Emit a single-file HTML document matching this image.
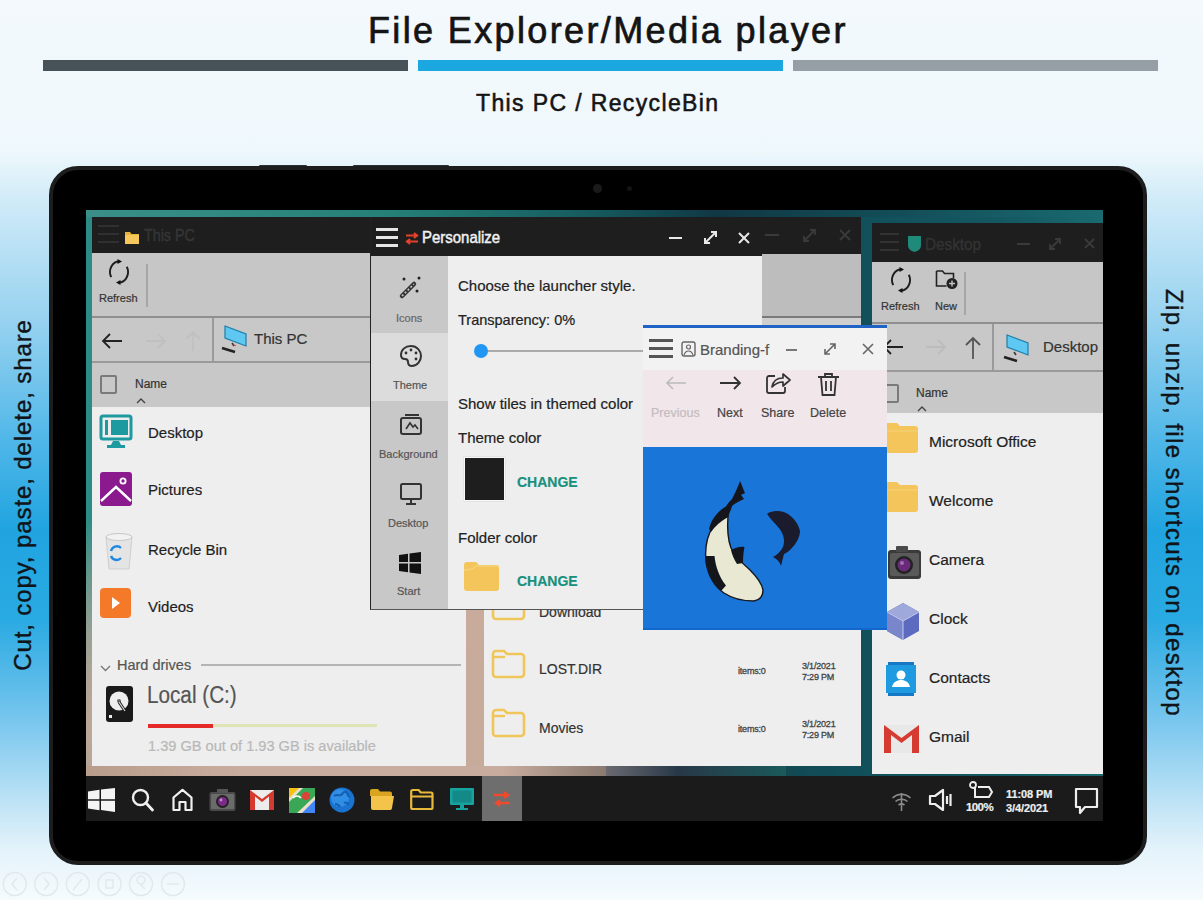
<!DOCTYPE html>
<html><head><meta charset="utf-8">
<style>
*{box-sizing:border-box;margin:0;padding:0}
html,body{width:1203px;height:900px;overflow:hidden}
body{position:relative;font-family:"Liberation Sans",sans-serif;
background:linear-gradient(180deg,#f3f9fc 0px,#eff8fc 150px,#d0ebf8 200px,#92d0ef 330px,#50b7e8 440px,#20a4e0 530px,#2aaae2 620px,#78c6ee 720px,#bce2f5 800px,#e4f3fb 850px,#f6fbfd 900px);}
.a{position:absolute}
.t{position:absolute;white-space:nowrap;line-height:1}
svg{position:absolute;overflow:visible}
#title{left:368px;top:13px;font-size:36px;color:#141414;letter-spacing:2.37px;-webkit-text-stroke:0.7px #141414}
.bar{position:absolute;top:59.5px;height:11px;width:365px}
#sub{left:476px;top:92px;font-size:23px;color:#141414;letter-spacing:1.37px;-webkit-text-stroke:0.55px #141414}
.rot{position:absolute;white-space:nowrap;font-size:24px;color:#101418;line-height:1;-webkit-text-stroke:0.4px #101418}
#tab{left:49px;top:166px;width:1098px;height:699px;border-radius:29px;background:#000;border:4px solid #1d1d1d}
#screen{left:86px;top:210px;width:1017px;height:611px;overflow:hidden;
background:linear-gradient(90deg,#2b8c86 0%,#226f6c 30%,#143e48 58%,#11505a 76%,#145862 90%,#1a6a70 100%)}
#taskbar{left:86px;top:776px;width:1017px;height:45px;background:#1b1b1b}
.win{position:absolute;overflow:hidden;background:#eeeeee}
.tb{position:absolute;left:0;top:0;right:0;background:#1e1e1e}
.g{position:absolute;left:0;right:0}
.it{position:absolute;white-space:nowrap;line-height:1;font-size:15px;color:#1e1e1e;-webkit-text-stroke:0.2px currentColor}
</style></head><body>
<div class="t" id="title">File Explorer/Media player</div>
<div class="bar" style="left:43px;background:#465258"></div>
<div class="bar" style="left:418px;background:#1ba8e1"></div>
<div class="bar" style="left:793px;background:#969ea6"></div>
<div class="t" id="sub">This PC / RecycleBin</div>
<div class="rot" id="lrot" style="left:23px;top:495px;transform:translate(-50%,-50%) rotate(-90deg);letter-spacing:0.9px">Cut, copy, paste, delete, share</div>
<div class="rot" id="rrot" style="left:1174px;top:503px;transform:translate(-50%,-50%) rotate(90deg);letter-spacing:1.4px">Zip, unzip, file shortcuts on desktop</div>

<div class="a" style="left:259px;top:164.5px;width:48px;height:4px;border-radius:1px;background:#2a3234"></div>
<div class="a" style="left:353px;top:164.5px;width:96px;height:4px;border-radius:1px;background:#2a3234"></div>
<div class="a" id="tab"></div>
<svg style="left:0;top:868px" width="200" height="32" viewBox="0 868 200 32">
  <g fill="none" stroke="#e3e8ec" stroke-width="1.5">
    <circle cx="14.8" cy="884" r="11.5"/><circle cx="46.2" cy="884" r="11.5"/><circle cx="77.8" cy="884" r="11.5"/><circle cx="109.5" cy="884" r="11.5"/><circle cx="141" cy="884" r="11.5"/><circle cx="173" cy="884" r="11.5"/>
    <path d="M17 878l-5 6 5 6M44 878l5 6-5 6M73 890l9-11M106 880h7v8h-7zM137 880a4 4 0 1 1 0 .1M140 884l5 5M167 884h12"/>
  </g>
</svg>

<div class="a" style="left:593px;top:184px;width:9px;height:9px;border-radius:50%;background:#1a1a1a"></div>
<div class="a" style="left:627px;top:186px;width:5px;height:5px;border-radius:50%;background:#141414"></div>
<div class="a" id="screen">
  <div class="a" style="left:0;top:0;width:1017px;height:611px;background:radial-gradient(ellipse 340px 260px at 200px 520px,#c6ab9b 0%,#c4a898 55%,rgba(150,120,105,0) 100%)"></div>
  <div class="a" style="left:376px;top:330px;width:26px;height:240px;background:linear-gradient(180deg,#b8a090,#c8ab9b 30%,#c6aa9a)"></div>
  <div class="a" style="left:0;top:556px;width:520px;height:10px;background:linear-gradient(90deg,#b89c8c,#c9ae9f 30%,#c8ad9e 80%,#8a7a70)"></div>
  <div class="a" style="left:520px;top:556px;width:180px;height:10px;background:linear-gradient(90deg,#6a6a70,#283848 40%,#1a5a5a)"></div>
  <div class="a" style="left:0;top:0;width:1017px;height:7px;background:linear-gradient(90deg,#3a9088,#258078 30%,#165a5e 50%,#103844 62%,#134e58 80%,#1a6a70)"></div>
</div>

<!-- ============ LEFT WINDOW: This PC ============ -->
<div class="win" id="w1" style="left:92px;top:217px;width:374px;height:549px">
  <div class="tb" style="height:36px"></div>
  <!-- hamburger faded -->
  <div class="a" style="left:6px;top:8px;width:21px;height:2px;background:#303030"></div>
  <div class="a" style="left:6px;top:16px;width:21px;height:2px;background:#303030"></div>
  <div class="a" style="left:6px;top:24px;width:21px;height:2px;background:#303030"></div>
  <svg style="left:33px;top:14px" width="14" height="13" viewBox="0 0 14 13"><path d="M0 1h5l1.5 2H14v10H0z" fill="#e8b23a"/><path d="M0 4h14v9H0z" fill="#f6c75a"/></svg>
  <div class="it" style="left:52px;top:10px;color:#363636;font-size:17px;transform:scaleX(0.84);transform-origin:0 0;-webkit-text-stroke:0.4px #363636">This PC</div>

  <div class="g" style="top:36px;height:64px;background:#c6c6c6"></div>
  <svg style="left:16px;top:42px" width="22" height="26" viewBox="0 0 22 26"><path d="M11 2.5A9 10.5 0 0 0 3.2 18.2M11 23.5A9 10.5 0 0 0 18.8 7.75" fill="none" stroke="#1e1e1e" stroke-width="1.9"/><path d="M9.5 0l4.5 2.5-4.5 2.5z" fill="#111"/><path d="M12.5 21l-4.5 2.5 4.5 2.5z" fill="#111"/></svg>
  <div class="it" style="left:7px;top:76px;font-size:11px;color:#333">Refresh</div>
  <div class="a" style="left:54px;top:47px;width:2px;height:43px;background:#a6a6a6"></div>
  <div class="g" style="top:99px;height:2px;background:#8f8f8f"></div>

  <div class="g" style="top:101px;height:43px;background:#c8c8c8"></div>
  <svg style="left:9px;top:115px" width="22" height="18" viewBox="0 0 22 18"><path d="M21 9H2M9 2L2 9l7 7" fill="none" stroke="#222" stroke-width="1.8"/></svg>
  <svg style="left:53px;top:115px" width="22" height="18" viewBox="0 0 22 18"><path d="M1 9h19M13 2l7 7-7 7" fill="none" stroke="#c0c0c0" stroke-width="1.8"/></svg>
  <svg style="left:92px;top:113px" width="18" height="22" viewBox="0 0 18 22"><path d="M9 21V2M2 9l7-7 7 7" fill="none" stroke="#c1c1c1" stroke-width="1.8"/></svg>
  <div class="a" style="left:120px;top:101px;width:2px;height:43px;background:#9a9a9a"></div>
  <svg style="left:129px;top:107px" width="27" height="30" viewBox="0 0 27 30"><path d="M4 2l21 8v12L4 14z" fill="#5ec8f2" stroke="#1d7ea8" stroke-width="1.2"/><path d="M11 19l2 3" stroke="#333" stroke-width="1.5"/><path d="M1 24l13 4" stroke="#222" stroke-width="2.5"/><path d="M12 20l3 2" stroke="#e04040" stroke-width="1"/></svg>
  <div class="it" style="left:162px;top:114px;font-size:15px;color:#333">This PC</div>
  <div class="g" style="top:144px;height:2px;background:#9a9a9a"></div>

  <div class="g" style="top:146px;height:44px;background:#c8c8c8"></div>
  <div class="a" style="left:8px;top:158px;width:17px;height:19px;border:2px solid #7a7a7a;border-radius:2px"></div>
  <div class="it" style="left:43px;top:161px;font-size:12px;color:#333">Name</div>
  <svg style="left:44px;top:181px" width="10" height="6" viewBox="0 0 10 6"><path d="M1 5l4-4 4 4" fill="none" stroke="#444" stroke-width="1.4"/></svg>

  <!-- items -->
  <svg style="left:7px;top:197px" width="34" height="36" viewBox="0 0 34 36"><rect x="2" y="2" width="30" height="23" rx="2" fill="none" stroke="#1c9aa0" stroke-width="3"/><rect x="12" y="6" width="17" height="15" fill="#1c9aa0"/><rect x="6" y="6" width="3" height="15" fill="#1c9aa0"/><path d="M14 27h6l2 4h4v3H8v-3h4z" fill="#1c9aa0"/></svg>
  <div class="it" style="left:56px;top:208px">Desktop</div>
  <svg style="left:7px;top:254px" width="34" height="36" viewBox="0 0 34 36"><rect x="1" y="1" width="32" height="34" rx="3" fill="#8a1a8e"/><path d="M2 30L17 16l15 14" fill="none" stroke="#fff" stroke-width="2.4"/><circle cx="24" cy="10" r="2.6" fill="none" stroke="#fff" stroke-width="1.8"/></svg>
  <div class="it" style="left:56px;top:265px">Pictures</div>
  <svg style="left:11px;top:314px" width="32" height="40" viewBox="0 0 32 40"><path d="M3 6h26l-3 32H6z" fill="#e4e4e4" stroke="#cfcfcf" stroke-width="1"/><ellipse cx="16" cy="6" rx="13" ry="3.5" fill="#f2f2f2" stroke="#c8c8c8"/><path d="M8 20a6 6 0 0 1 10-3M18 27a6 6 0 0 1-10-2" fill="none" stroke="#1e88e5" stroke-width="2.4"/></svg>
  <div class="it" style="left:56px;top:325px">Recycle Bin</div>
  <svg style="left:8px;top:371px" width="31" height="30" viewBox="0 0 31 30"><rect x="0" y="0" width="31" height="30" rx="4" fill="#f47a2a"/><path d="M12 9l8 6-8 6z" fill="#fff"/></svg>
  <div class="it" style="left:56px;top:382px">Videos</div>

  <svg style="left:8px;top:448px" width="11" height="7" viewBox="0 0 11 7"><path d="M1 1l4.5 4.5L10 1" fill="none" stroke="#777" stroke-width="1.4"/></svg>
  <div class="it" style="left:25px;top:441px;font-size:14.5px;color:#555">Hard drives</div>
  <div class="a" style="left:109px;top:447px;width:260px;height:2px;background:#b4b4b4"></div>
  <svg style="left:14px;top:469px" width="27" height="36" viewBox="0 0 27 36"><rect x="0" y="0" width="27" height="36" rx="3" fill="#1a1a1a"/><circle cx="13" cy="15" r="9.5" fill="#eee"/><circle cx="13" cy="15" r="2" fill="#666"/><path d="M13 16l6 9" stroke="#1a1a1a" stroke-width="3"/><path d="M13 16l6 9" stroke="#ddd" stroke-width="1.2"/><rect x="3" y="29" width="3" height="3" fill="#eee"/></svg>
  <div class="it" style="left:55px;top:467px;font-size:23px;color:#555;transform:scaleX(0.9);transform-origin:0 0">Local (C:)</div>
  <div class="a" style="left:56px;top:507px;width:229px;height:3px;background:#dfe4b4"></div>
  <div class="a" style="left:56px;top:507px;width:65px;height:4px;background:#e52a2a"></div>
  <div class="it" style="left:56px;top:522px;font-size:14.6px;color:#b8b8b8">1.39 GB out of 1.93 GB is available</div>
</div>


<!-- ============ MIDDLE WINDOW ============ -->
<div class="win" id="w2" style="left:484px;top:217px;width:377px;height:549px">
  <div class="tb" style="height:37px"></div>
  <div class="a" style="left:281px;top:17px;width:14px;height:2px;background:#3a3a3a"></div>
  <svg style="left:318px;top:11px" width="15" height="15" viewBox="0 0 15 15"><path d="M2 13L13 2M8 2h5v5M2 8v5h5" fill="none" stroke="#3a3a3a" stroke-width="1.8"/></svg>
  <svg style="left:355px;top:12px" width="12" height="12" viewBox="0 0 12 12"><path d="M1 1l10 10M11 1L1 11" fill="none" stroke="#3a3a3a" stroke-width="1.8"/></svg>
  <div class="g" style="top:37px;height:62px;background:#bdbdbd"></div>
  <div class="g" style="top:99px;height:2px;background:#7a7a7a"></div>
  <div class="g" style="top:101px;height:44px;background:#cfcfcf"></div>
  <!-- items -->
  <svg style="left:7px;top:374px" width="35" height="30" viewBox="0 0 35 30"><path d="M2 5a3 3 0 0 1 3-3h8l3 3h14a3 3 0 0 1 3 3v17a3 3 0 0 1-3 3H5a3 3 0 0 1-3-3z" fill="none" stroke="#f0c65a" stroke-width="2.6"/><path d="M3 8h11" stroke="#f0c65a" stroke-width="2.4"/></svg>
  <div class="it" style="left:55px;top:388px;font-size:14px;color:#333">Download</div>
  <svg style="left:7px;top:432px" width="35" height="30" viewBox="0 0 35 30"><path d="M2 5a3 3 0 0 1 3-3h8l3 3h14a3 3 0 0 1 3 3v17a3 3 0 0 1-3 3H5a3 3 0 0 1-3-3z" fill="none" stroke="#f0c65a" stroke-width="2.6"/><path d="M3 8h11" stroke="#f0c65a" stroke-width="2.4"/></svg>
  <div class="it" style="left:55px;top:445px;font-size:14px;color:#333">LOST.DIR</div>
  <svg style="left:7px;top:491px" width="35" height="30" viewBox="0 0 35 30"><path d="M2 5a3 3 0 0 1 3-3h8l3 3h14a3 3 0 0 1 3 3v17a3 3 0 0 1-3 3H5a3 3 0 0 1-3-3z" fill="none" stroke="#f0c65a" stroke-width="2.6"/><path d="M3 8h11" stroke="#f0c65a" stroke-width="2.4"/></svg>
  <div class="it" style="left:55px;top:504px;font-size:14px;color:#333">Movies</div>
  <div class="it" style="left:254px;top:450px;font-size:9px;color:#444;-webkit-text-stroke:0.3px #444;letter-spacing:-0.2px">items:0</div>
  <div class="it" style="left:318px;top:444px;font-size:9px;color:#444;-webkit-text-stroke:0.3px #444;letter-spacing:-0.2px;line-height:10.5px">3/1/2021<br>7:29 PM</div>
  <div class="it" style="left:254px;top:508px;font-size:9px;color:#444;-webkit-text-stroke:0.3px #444;letter-spacing:-0.2px">items:0</div>
  <div class="it" style="left:318px;top:502px;font-size:9px;color:#444;-webkit-text-stroke:0.3px #444;letter-spacing:-0.2px;line-height:10.5px">3/1/2021<br>7:29 PM</div>
</div>

<!-- ============ RIGHT WINDOW: Desktop ============ -->
<div class="win" id="w3" style="left:872px;top:223px;width:231px;height:551px">
  <div class="tb" style="height:39px"></div>
  <div class="a" style="left:8px;top:10px;width:19px;height:2px;background:#333"></div>
  <div class="a" style="left:8px;top:18px;width:19px;height:2px;background:#333"></div>
  <div class="a" style="left:8px;top:26px;width:19px;height:2px;background:#333"></div>
  <svg style="left:36px;top:13px" width="13" height="16" viewBox="0 0 13 16"><path d="M0 0h13v9c0 4-3 6-6.5 7C3 15 0 13 0 9z" fill="#1f8a7a"/></svg>
  <div class="it" style="left:53px;top:13px;color:#333;font-size:17px;transform:scaleX(0.9);transform-origin:0 0;-webkit-text-stroke:0.4px #333">Desktop</div>
  <div class="a" style="left:145px;top:20px;width:13px;height:2px;background:#3a3a3a"></div>
  <svg style="left:176px;top:14px" width="14" height="14" viewBox="0 0 14 14"><path d="M2 12L12 2M7 2h5v5M2 7v5h5" fill="none" stroke="#3a3a3a" stroke-width="1.8"/></svg>
  <svg style="left:212px;top:15px" width="11" height="11" viewBox="0 0 11 11"><path d="M1 1l9 9M10 1L1 10" fill="none" stroke="#3a3a3a" stroke-width="1.8"/></svg>
  <div class="g" style="top:39px;height:60px;background:#c6c6c6"></div>
  <svg style="left:18px;top:44px" width="22" height="26" viewBox="0 0 22 26"><path d="M11 2.5A9 10.5 0 0 0 3.2 18.2M11 23.5A9 10.5 0 0 0 18.8 7.75" fill="none" stroke="#1e1e1e" stroke-width="1.9"/><path d="M9.5 0l4.5 2.5-4.5 2.5z" fill="#111"/><path d="M12.5 21l-4.5 2.5 4.5 2.5z" fill="#111"/></svg>
  <div class="it" style="left:9px;top:78px;font-size:11px;color:#333">Refresh</div>
  <svg style="left:63px;top:45px" width="24" height="22" viewBox="0 0 24 22"><path d="M1.5 3h6l2 2.5h9v5M1.5 3v15h10" fill="none" stroke="#222" stroke-width="1.6"/><circle cx="17" cy="15.5" r="5.5" fill="#222"/><path d="M17 12.5v6M14 15.5h6" stroke="#c6c6c6" stroke-width="1.4"/></svg>
  <div class="it" style="left:63px;top:78px;font-size:11px;color:#333">New</div>
  <div class="a" style="left:92px;top:49px;width:2px;height:43px;background:#a6a6a6"></div>
  <div class="g" style="top:99px;height:2px;background:#8f8f8f"></div>
  <div class="g" style="top:101px;height:46px;background:#c8c8c8"></div>
  <svg style="left:10px;top:115px" width="22" height="18" viewBox="0 0 22 18"><path d="M21 9H2M9 2L2 9l7 7" fill="none" stroke="#222" stroke-width="1.8"/></svg>
  <svg style="left:53px;top:115px" width="22" height="18" viewBox="0 0 22 18"><path d="M1 9h19M13 2l7 7-7 7" fill="none" stroke="#bcbcbc" stroke-width="1.8"/></svg>
  <svg style="left:92px;top:113px" width="18" height="24" viewBox="0 0 18 24"><path d="M9 23V2M2 9l7-7 7 7" fill="none" stroke="#555" stroke-width="1.8"/></svg>
  <div class="a" style="left:120px;top:101px;width:2px;height:46px;background:#9a9a9a"></div>
  <svg style="left:131px;top:110px" width="27" height="30" viewBox="0 0 27 30"><path d="M4 2l21 8v12L4 14z" fill="#5ec8f2" stroke="#1d7ea8" stroke-width="1.2"/><path d="M11 19l2 3" stroke="#333" stroke-width="1.5"/><path d="M1 24l13 4" stroke="#222" stroke-width="2.5"/></svg>
  <div class="it" style="left:171px;top:116px;font-size:15px;color:#333">Desktop</div>
  <div class="g" style="top:147px;height:2px;background:#9a9a9a"></div>
  <div class="g" style="top:149px;height:41px;background:#c8c8c8"></div>
  <div class="a" style="left:10px;top:161px;width:17px;height:19px;border:2px solid #7a7a7a;border-radius:2px"></div>
  <div class="it" style="left:44px;top:164px;font-size:12px;color:#333">Name</div>
  <svg style="left:45px;top:183px" width="10" height="6" viewBox="0 0 10 6"><path d="M1 5l4-4 4 4" fill="none" stroke="#444" stroke-width="1.4"/></svg>
  <!-- items -->
  <svg style="left:13px;top:200px" width="33" height="30" viewBox="0 0 33 30"><path d="M0 3a3 3 0 0 1 3-3h9l3 3h15a3 3 0 0 1 3 3v21a3 3 0 0 1-3 3H3a3 3 0 0 1-3-3z" fill="#f4c55a"/><path d="M0 8h33" stroke="#f8d27a" stroke-width="1"/></svg>
  <div class="it" style="left:57px;top:211px;font-size:15.5px;color:#222">Microsoft Office</div>
  <svg style="left:13px;top:259px" width="33" height="30" viewBox="0 0 33 30"><path d="M0 3a3 3 0 0 1 3-3h9l3 3h15a3 3 0 0 1 3 3v21a3 3 0 0 1-3 3H3a3 3 0 0 1-3-3z" fill="#f4c55a"/><path d="M0 8h33" stroke="#f8d27a" stroke-width="1"/></svg>
  <div class="it" style="left:57px;top:270px;font-size:15.5px;color:#222">Welcome</div>
  <svg style="left:16px;top:322px" width="33" height="35" viewBox="0 0 33 35"><rect x="0" y="5" width="33" height="29" rx="3" fill="#3a3a3a"/><rect x="2" y="8" width="29" height="23" rx="2" fill="#5a5a5a"/><rect x="8" y="1" width="12" height="6" rx="1" fill="#4a4a4a"/><circle cx="16" cy="20" r="9" fill="#222"/><circle cx="16" cy="20" r="6.5" fill="#6a2a7a"/><circle cx="14" cy="18" r="2" fill="#a070b0"/></svg>
  <div class="it" style="left:57px;top:329px;font-size:15.5px;color:#222">Camera</div>
  <svg style="left:14px;top:379px" width="34" height="39" viewBox="0 0 34 39"><path d="M17 1L33 10v19L17 38 1 29V10z" fill="#5c6bc0"/><path d="M17 1L33 10 17 19 1 10z" fill="#9fa8da"/><path d="M17 19v19L1 29V10z" fill="#7986cb"/><path d="M17 19L33 10M17 19L1 10M17 19v19" stroke="#c5cae9" stroke-width="1"/></svg>
  <div class="it" style="left:57px;top:388px;font-size:15.5px;color:#222">Clock</div>
  <svg style="left:12px;top:439px" width="34" height="34" viewBox="0 0 34 34"><path d="M2 3h30v28H2z" fill="#1e9ae0"/><path d="M4 0h26v3H4zM4 31h26v3H4z" fill="#1677c4"/><circle cx="17" cy="13" r="4.5" fill="#fff"/><path d="M8 25c1-5 5-7 9-7s8 2 9 7z" fill="#fff"/></svg>
  <div class="it" style="left:57px;top:447px;font-size:15.5px;color:#222">Contacts</div>
  <svg style="left:10px;top:500px" width="39" height="31" viewBox="0 0 39 31"><path d="M2 2h35v28H2z" fill="#e8e8e8"/><path d="M2 2v28h7V12l10.5 8L30 12v18h7V2l-17.5 13z" fill="#d53b30"/></svg>
  <div class="it" style="left:57px;top:506px;font-size:15.5px;color:#222">Gmail</div>
</div>

<!-- ============ PERSONALIZE ============ -->
<div class="win" id="w4" style="left:370px;top:217px;width:392px;height:393px;background:#eeeeee;border-left:1.5px solid #222;border-bottom:1.5px solid #555">
  <div class="tb" style="height:39px"></div>
  <div class="a" style="left:5px;top:11px;width:22px;height:3px;background:#e6e6e6"></div>
  <div class="a" style="left:5px;top:19px;width:22px;height:3px;background:#e6e6e6"></div>
  <div class="a" style="left:5px;top:27px;width:22px;height:3px;background:#e6e6e6"></div>
  <svg style="left:34px;top:15px" width="14" height="13" viewBox="0 0 14 13"><path d="M1 3.5h11M9 1l3 2.5-3 2.5M13 9.5H2M5 7l-3 2.5 3 2.5" fill="none" stroke="#e5412a" stroke-width="2.2"/></svg>
  <div class="it" style="left:51px;top:12px;font-size:17px;color:#f0f0f0;transform:scaleX(0.88);transform-origin:0 0;-webkit-text-stroke:0.5px #f0f0f0">Personalize</div>
  <div class="a" style="left:298px;top:20px;width:13px;height:2px;background:#e8e8e8"></div>
  <svg style="left:332px;top:13px" width="15" height="15" viewBox="0 0 15 15"><path d="M2 13L13 2M8 2h5v5M2 8v5h5" fill="none" stroke="#e8e8e8" stroke-width="2"/></svg>
  <svg style="left:367px;top:15px" width="12" height="12" viewBox="0 0 12 12"><path d="M1 1l10 10M11 1L1 11" fill="none" stroke="#e8e8e8" stroke-width="2"/></svg>
  <div class="a" style="left:0;top:39px;width:77px;height:354px;background:#c8c8c8"></div>
  <div class="a" style="left:0;top:116px;width:77px;height:68px;background:#dcdcdc"></div>
  <!-- side icons -->
  <svg style="left:28px;top:59px" width="23" height="23" viewBox="0 0 23 23"><path d="M3 20L15 8" stroke="#333" stroke-width="4.5" stroke-linecap="round"/><path d="M3 20L15 8" stroke="#c8c8c8" stroke-width="1.6" stroke-dasharray="2 2"/><circle cx="5" cy="3" r="1.5" fill="#222"/><circle cx="20" cy="2" r="1.5" fill="#222"/><circle cx="18" cy="15" r="1.5" fill="#222"/></svg>
  <div class="it" style="left:25px;top:96px;font-size:11px;color:#666">Icons</div>
  <svg style="left:28px;top:127px" width="24" height="24" viewBox="0 0 24 24"><path d="M12 2C6 2 2 6 2 11c0 3 2 4 4 4 2 0 3 1 3 3 0 2 1 4 4 4 5 0 9-5 9-10S18 2 12 2z" fill="none" stroke="#333" stroke-width="2"/><circle cx="7" cy="9" r="1.4" fill="#333"/><circle cx="12" cy="6" r="1.4" fill="#333"/><circle cx="17" cy="9" r="1.4" fill="#333"/><circle cx="17" cy="15" r="1.4" fill="#333"/></svg>
  <div class="it" style="left:22px;top:163px;font-size:11px;color:#555">Theme</div>
  <svg style="left:28px;top:196px" width="24" height="22" viewBox="0 0 24 22"><rect x="2" y="5" width="20" height="16" rx="2" fill="none" stroke="#333" stroke-width="2"/><path d="M6 2h14" stroke="#333" stroke-width="2"/><path d="M7 16l4-6 3 4 2-2 3 4" fill="none" stroke="#333" stroke-width="1.6"/></svg>
  <div class="it" style="left:8px;top:232px;font-size:11px;color:#555">Background</div>
  <svg style="left:28px;top:265px" width="24" height="24" viewBox="0 0 24 24"><rect x="2" y="2" width="20" height="15" rx="1.5" fill="none" stroke="#333" stroke-width="2"/><path d="M12 17v4M7 22h10" stroke="#333" stroke-width="2"/></svg>
  <div class="it" style="left:17px;top:301px;font-size:11px;color:#555">Desktop</div>
  <svg style="left:27px;top:334px" width="24" height="24" viewBox="0 0 24 24"><path d="M1 4l9-1.3V11H1zM11.5 2.5L23 1v10H11.5zM1 12.5h9v8.8L1 20zM11.5 12.5H23V23l-11.5-1.5z" fill="#111"/></svg>
  <div class="it" style="left:26px;top:369px;font-size:11px;color:#555">Start</div>
  <!-- content -->
  <div class="it" style="left:87px;top:61px;font-size:15px;color:#222">Choose the launcher style.</div>
  <div class="it" style="left:87px;top:96px;font-size:14.5px;color:#222">Transparency: 0%</div>
  <div class="a" style="left:110px;top:133px;width:280px;height:2px;background:#aaa"></div>
  <div class="a" style="left:103px;top:127px;width:14px;height:14px;border-radius:50%;background:#2196f3"></div>
  <div class="it" style="left:87px;top:179px;font-size:15px;color:#222">Show tiles in themed color</div>
  <div class="it" style="left:87px;top:213px;font-size:15px;color:#222">Theme color</div>
  <div class="a" style="left:93px;top:240px;width:41px;height:44px;background:#1e1e1e;border:1.5px solid #f8f8f8;box-shadow:0 0 1px #aaa"></div>
  <div class="it" style="left:146px;top:258px;font-size:14px;color:#17917f;font-weight:bold">CHANGE</div>
  <div class="it" style="left:87px;top:313px;font-size:15px;color:#222">Folder color</div>
  <svg style="left:93px;top:345px" width="35" height="29" viewBox="0 0 35 29"><path d="M0 3a3 3 0 0 1 3-3h9l3 3h17a3 3 0 0 1 3 3v20a3 3 0 0 1-3 3H3a3 3 0 0 1-3-3z" fill="#f4c55a"/><path d="M0 8c5 0 9-1 12-4h23" fill="none" stroke="#f8d98a" stroke-width="1"/></svg>
  <div class="it" style="left:146px;top:357px;font-size:14px;color:#17917f;font-weight:bold">CHANGE</div>
</div>

<!-- ============ BRANDING IMAGE VIEWER ============ -->
<div class="win" id="w5" style="left:643px;top:325px;width:244px;height:305px;background:#f2f2f2">
  <div class="g" style="top:0;height:2.5px;background:#1f63c4"></div>
  <div class="a" style="left:6px;top:14px;width:24px;height:2.5px;background:#555"></div>
  <div class="a" style="left:6px;top:22px;width:24px;height:2.5px;background:#555"></div>
  <div class="a" style="left:6px;top:30px;width:24px;height:2.5px;background:#555"></div>
  <svg style="left:38px;top:16px" width="15" height="16" viewBox="0 0 15 16"><rect x="1" y="1" width="13" height="14" rx="2" fill="none" stroke="#666" stroke-width="1.4"/><circle cx="7.5" cy="6" r="2" fill="none" stroke="#666" stroke-width="1.2"/><path d="M3 14c1-3 3-4 4.5-4s3.5 1 4.5 4" fill="none" stroke="#666" stroke-width="1.2"/></svg>
  <div class="it" style="left:57px;top:17px;font-size:15px;color:#555">Branding-f</div>
  <div class="a" style="left:143px;top:24px;width:11px;height:2px;background:#777"></div>
  <svg style="left:180px;top:17px" width="14" height="14" viewBox="0 0 14 14"><path d="M2 12L12 2M7 2h5v5M2 7v5h5" fill="none" stroke="#666" stroke-width="1.6"/></svg>
  <svg style="left:219px;top:18px" width="12" height="12" viewBox="0 0 12 12"><path d="M1 1l10 10M11 1L1 11" fill="none" stroke="#666" stroke-width="1.6"/></svg>
  <div class="g" style="top:45px;height:77px;background:#f1e6ea"></div>
  <svg style="left:22px;top:51px" width="22" height="14" viewBox="0 0 22 14"><path d="M21 7H2M8 1L2 7l6 6" fill="none" stroke="#bbb" stroke-width="1.6"/></svg>
  <div class="it" style="left:8px;top:82px;font-size:12.5px;color:#c4bcbe">Previous</div>
  <svg style="left:76px;top:51px" width="23" height="14" viewBox="0 0 23 14"><path d="M1 7h20M15 1l6 6-6 6" fill="none" stroke="#333" stroke-width="1.8"/></svg>
  <div class="it" style="left:74px;top:82px;font-size:12.5px;color:#444">Next</div>
  <svg style="left:123px;top:47px" width="25" height="22" viewBox="0 0 25 22"><path d="M9 4H3a2 2 0 0 0-2 2v13a2 2 0 0 0 2 2h14a2 2 0 0 0 2-2v-4" fill="none" stroke="#333" stroke-width="1.8"/><path d="M6 15c1-6 5-9 11-9V2l7 6-7 6V10c-5 0-8 2-11 5z" fill="none" stroke="#333" stroke-width="1.7" stroke-linejoin="round"/></svg>
  <div class="it" style="left:118px;top:82px;font-size:12.5px;color:#444">Share</div>
  <svg style="left:174px;top:47px" width="23" height="25" viewBox="0 0 23 25"><path d="M1 5h21M8 5V2h7v3M4 5l1.5 18h12L19 5M9 9v10M14 9v10" fill="none" stroke="#333" stroke-width="1.8"/></svg>
  <div class="it" style="left:167px;top:82px;font-size:12.5px;color:#444">Delete</div>
  <div class="g" style="top:122px;height:183px;background:#1976d8;border-bottom:2px solid #1266cc"></div>
  <svg style="left:0;top:0" width="245" height="305" viewBox="643 325 245 305">
    <path d="M728 516 C720 519 713 524 710 532 C706 541 705 552 706 562 C708 575 714 586 724 593 C733 599 745 601 754 601 C760 600 763 596 763 590 C762 584 757 577 750 570 C742 563 735 556 731 548 C728 540 727 530 728 516 Z" fill="#e9e8d2" stroke="#15151c" stroke-width="1.4"/>
    <path d="M725 507 L732 506 C731 510 729 514 728 517 C721 521 715 526 711 532 L709 529 C711 520 717 512 725 507 Z" fill="#15151c"/>
    <path d="M705.5 556 C705.5 558 705.7 560 706 562 C708 575 714 586 721 591 L726 585.5 C719 577 715.5 566 714.5 556 Z" fill="#15151c"/>
    <path d="M731 550 C735 548 740 546 744.5 547 C743.5 552 743 557 743 563 L737 564 C734 559 732 555 731 550 Z" fill="#15151c"/>
    <path d="M740 481 C742 485 743 489 745 493 L741 495 L744 499 C740 501 735 503 731 507 L725 508 C727 504 730 501 732 499 C735 493 738 487 740 481 Z" fill="#15151c"/>
    <path d="M767 514 C770 511 781 509 788 514 C794 518 799 525 800 531 C800 537 796 544 791 549 C788 552 786 553 784 554 L781 566 C780 562 777 559 773 557 C777 555 781 551 783 547 C785 542 784 536 781 531 C778 526 772 521 767 514 Z" fill="#1b1b2e"/>
  </svg>
</div>

<div class="a" id="taskbar">
  <!-- coordinates relative to taskbar: page x-86, y-776 -->
  <svg style="left:2px;top:12px" width="27" height="24" viewBox="0 0 27 24"><path d="M0 3.5L11.5 1.8V11.3H0zM13 1.5L27 0V11.3H13zM0 12.7h11.5v9.6L0 20.6zM13 12.7h14V24l-14-1.9z" fill="#f4f4f4"/></svg>
  <svg style="left:45px;top:12px" width="23" height="24" viewBox="0 0 23 24"><circle cx="9.5" cy="9.5" r="7.5" fill="none" stroke="#f0f0f0" stroke-width="2.4"/><path d="M15 15l6.5 7" stroke="#f0f0f0" stroke-width="2.8" stroke-linecap="round"/></svg>
  <svg style="left:85px;top:12px" width="23" height="23" viewBox="0 0 23 23"><path d="M2.5 22V9.5L11.5 1.8l9 7.7V22h-6v-8h-6v8z" fill="none" stroke="#f0f0f0" stroke-width="2.2" stroke-linejoin="round"/></svg>
  <svg style="left:123px;top:12px" width="27" height="24" viewBox="0 0 27 24"><rect x="0.5" y="4" width="26" height="19" rx="2" fill="#4a4a4a"/><rect x="2" y="6" width="23" height="15" rx="1" fill="#6b6b6b"/><rect x="8" y="1" width="11" height="4" fill="#555"/><circle cx="13.5" cy="13.5" r="6.5" fill="#222"/><circle cx="13.5" cy="13.5" r="4.6" fill="#7a2a88"/><circle cx="12" cy="12" r="1.4" fill="#c090d0"/></svg>
  <svg style="left:163px;top:13px" width="26" height="22" viewBox="0 0 26 22"><path d="M1 1h24v20H1z" fill="#ececec"/><path d="M1 1v20h5V7.5l7 5.5 7-5.5V21h5V1l-12 9z" fill="#d63a2e"/></svg>
  <svg style="left:203px;top:12px" width="26" height="25" viewBox="0 0 26 25"><path d="M0 0h26v25H0z" fill="#e8e0c8"/><path d="M0 14L14 0h12v8L8 25H0z" fill="#3aa757"/><path d="M13 25L26 12v13z" fill="#4285f4"/><path d="M0 0h10L0 10z" fill="#f4c20d"/><circle cx="17" cy="8" r="4" fill="#db4437"/><path d="M4 10a5 5 0 0 1 8 0" fill="none" stroke="#fff" stroke-width="1.6"/></svg>
  <svg style="left:243px;top:11px" width="26" height="26" viewBox="0 0 26 26"><circle cx="13" cy="13" r="12.5" fill="#1a73d1"/><circle cx="11" cy="11" r="9" fill="#3a9af0" opacity="0.7"/><path d="M5 9c3-2 5 0 7-1s2-4 5-3c2 1 1 4 4 5M6 17c2 0 4 1 5 3M15 16c2-1 4 0 5 2" fill="none" stroke="#135fb0" stroke-width="2"/></svg>
  <svg style="left:284px;top:13px" width="24" height="21" viewBox="0 0 24 21"><path d="M0 2a2 2 0 0 1 2-2h6l2 2.5h10a2 2 0 0 1 2 2V7H0z" fill="#d9a520"/><path d="M1 7h23l-2 12a2 2 0 0 1-2 2H3a2 2 0 0 1-2-2z" fill="#f4c44a"/></svg>
  <svg style="left:324px;top:13px" width="24" height="21" viewBox="0 0 24 21"><path d="M1.2 2.5a1.5 1.5 0 0 1 1.5-1.5h6l2 2.5h10.3a1.5 1.5 0 0 1 1.5 1.5v13.5a1.5 1.5 0 0 1-1.5 1.5H2.7a1.5 1.5 0 0 1-1.5-1.5z" fill="none" stroke="#e9b93c" stroke-width="2.2"/><path d="M1.5 7.5h21" stroke="#e9b93c" stroke-width="2"/></svg>
  <svg style="left:364px;top:12px" width="24" height="24" viewBox="0 0 24 24"><rect x="0" y="0" width="24" height="17" rx="1" fill="#17a3a0"/><rect x="2.5" y="2.5" width="19" height="12" fill="#138a88"/><path d="M10 17h4v3h4v2H6v-2h4z" fill="#17a3a0"/></svg>
  <div class="a" style="left:396px;top:0;width:40px;height:45px;background:#6e6e6e"></div>
  <svg style="left:406px;top:15px" width="20" height="16" viewBox="0 0 20 16"><path d="M2 4h14M12 1l4 3-4 3M18 12H4M8 9l-4 3 4 3" fill="none" stroke="#ef4a2e" stroke-width="2.4"/></svg>
  <!-- tray -->
  <svg style="left:805px;top:15px" width="21" height="20" viewBox="0 0 21 20"><path d="M1.5 7a13 13 0 0 1 18 0M4.5 10.5a9 9 0 0 1 12 0M7.5 14a5 5 0 0 1 6 0" fill="none" stroke="#8a8a8a" stroke-width="1.6"/><path d="M10.5 2v18" stroke="#8a8a8a" stroke-width="1.6"/></svg>
  <svg style="left:842px;top:12px" width="26" height="24" viewBox="0 0 26 24"><path d="M2 8h5l8-6v20l-8-6H2z" fill="none" stroke="#eee" stroke-width="2.2" stroke-linejoin="round"/><path d="M19 8v8M22.5 6v12" stroke="#eee" stroke-width="2.2"/></svg>
  <svg style="left:883px;top:5px" width="25" height="18" viewBox="0 0 25 18"><circle cx="4" cy="4" r="3" fill="none" stroke="#eee" stroke-width="1.8"/><path d="M6 6v10h14l3-5-3-5H9" fill="none" stroke="#eee" stroke-width="2"/></svg>
  <div class="it" style="left:880px;top:26px;font-size:11.5px;color:#eee;font-weight:bold;letter-spacing:-0.6px">100%</div>
  <div class="it" style="left:920px;top:11px;font-size:11px;color:#eee;font-weight:bold;letter-spacing:-0.1px;line-height:14px">11:08 PM<br>3/4/2021</div>
  <svg style="left:988px;top:11px" width="25" height="30" viewBox="0 0 25 30"><path d="M2 2h21v18H11l-5 6v-6H2z" fill="none" stroke="#eee" stroke-width="2.2" stroke-linejoin="round"/></svg>
</div>
</body></html>
